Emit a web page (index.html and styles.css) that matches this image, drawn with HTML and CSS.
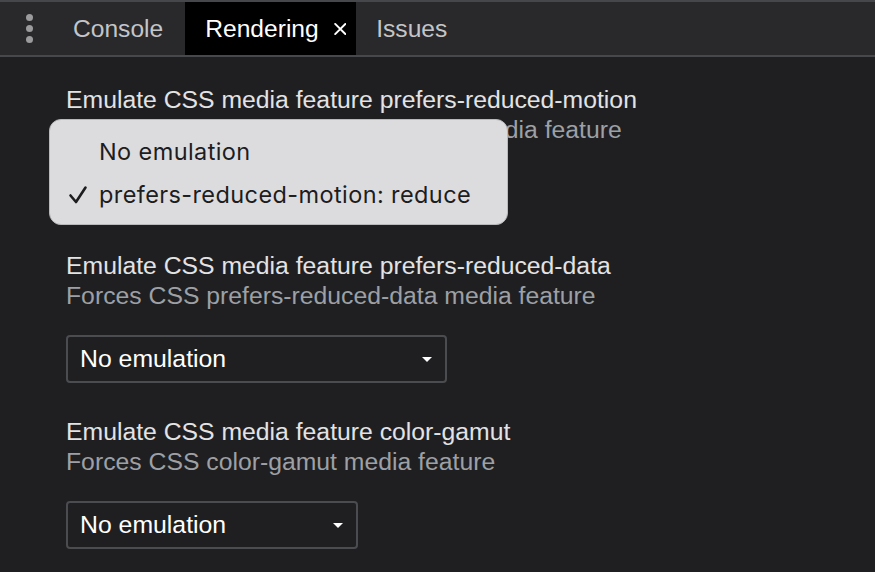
FILE: index.html
```html
<!DOCTYPE html>
<html lang="en">
<head>
  <meta charset="UTF-8">
  <title>Rendering</title>
  <link rel="stylesheet" href="styles.css">
</head>
<body>
<div class="tabbar">
  <div class="kebab">
    <span class="dot"></span>
    <span class="dot"></span>
    <span class="dot"></span>
  </div>
  <div class="tab">Console</div>
  <div class="tab active">Rendering
    <svg class="close" width="16" height="16" viewBox="0 0 16 16">
      <path d="M1.5 1.5 L14.5 14.5 M14.5 1.5 L1.5 14.5" stroke="#fff" stroke-width="2.5" stroke-linecap="round"/>
    </svg>
  </div>
  <div class="tab">Issues</div>
</div>

<div class="panel">
  <div class="section">
    <div class="title">Emulate CSS media feature prefers-reduced-motion</div>
    <div class="subtitle">Forces CSS prefers-reduced-motion media feature</div>
    <div class="select wide">No emulation <span class="arrow"></span></div>
  </div>

  <div class="section">
    <div class="title">Emulate CSS media feature prefers-reduced-data</div>
    <div class="subtitle">Forces CSS prefers-reduced-data media feature</div>
    <div class="select wide">No emulation <span class="arrow"></span></div>
  </div>

  <div class="section">
    <div class="title">Emulate CSS media feature color-gamut</div>
    <div class="subtitle">Forces CSS color-gamut media feature</div>
    <div class="select narrow">No emulation <span class="arrow"></span></div>
  </div>

  <div class="menu">
    <div class="menu-item"><span class="check"></span>No emulation</div>
    <div class="menu-item">
      <span class="check">
        <svg width="20" height="20" viewBox="0 0 20 20">
          <path d="M2.5 10.5 L8 17 L17.5 2.5" fill="none" stroke="#1d1d1f" stroke-width="2.6" stroke-linecap="round" stroke-linejoin="round"/>
        </svg>
      </span>prefers-reduced-motion: reduce</div>
  </div>
</div>
</body>
</html>
```

FILE: styles.css
```css
body {
  margin: 0;
  background: #1f1f22;
  font-family: "Liberation Sans", Arial, sans-serif;
  overflow: hidden;
}

.tabbar {
  display: flex;
  align-items: stretch;
  height: 53px;
  background: #29292c;
  border-top: 2px solid #46474a;
  border-bottom: 2px solid #47484b;
}

.kebab {
  width: 53px;
  display: flex;
  flex-direction: column;
  justify-content: center;
  align-items: center;
  gap: 4px;
  padding-left: 5px;
  box-sizing: border-box;
}

.dot {
  width: 7px;
  height: 7px;
  border-radius: 50%;
  background: #9b9b9d;
}

.tab {
  display: flex;
  align-items: center;
  padding: 0 22px 0 20px;
  font-size: 24.6px;
  color: #c4c5c8;
}

.tab.active {
  background: #000;
  color: #fff;
  padding: 0 10px 0 20px;
  width: 171px;
  box-sizing: border-box;
}

.close {
  margin-left: 15px;
}

.panel {
  position: relative;
  padding: 28px 0 0 66px;
}

.section {
  margin-bottom: 34px;
}

.title {
  font-size: 24.75px;
  line-height: 30px;
  color: #e3e3e5;
}

.subtitle {
  font-size: 24.75px;
  line-height: 30px;
  color: #9da0a5;
}

.select {
  margin-top: 24px;
  height: 48px;
  box-sizing: border-box;
  border: 2px solid #4b4c50;
  border-radius: 4px;
  display: flex;
  align-items: center;
  justify-content: space-between;
  padding: 0 12px 0 12px;
  font-size: 24.8px;
  color: #fff;
}

.select.wide {
  width: 381px;
}

.select.narrow {
  width: 292px;
}

.arrow {
  width: 0;
  height: 0;
  border-left: 5px solid transparent;
  border-right: 5px solid transparent;
  border-top: 5px solid #fff;
  margin-right: 1px;
}

.menu {
  position: absolute;
  left: 49px;
  top: 62px;
  width: 459px;
  height: 106px;
  box-sizing: border-box;
  background: #dcdcde;
  border: 1px solid #b9b9bc;
  border-radius: 12px;
  padding: 10px 0 0 18px;
  font-family: Inter, sans-serif;
  font-size: 23.5px;
  letter-spacing: 0.4px;
  color: #1d1d1f;
}

.menu-item {
  display: flex;
  align-items: center;
  height: 43px;
}

.check {
  width: 31px;
  display: flex;
  align-items: center;
}
```
